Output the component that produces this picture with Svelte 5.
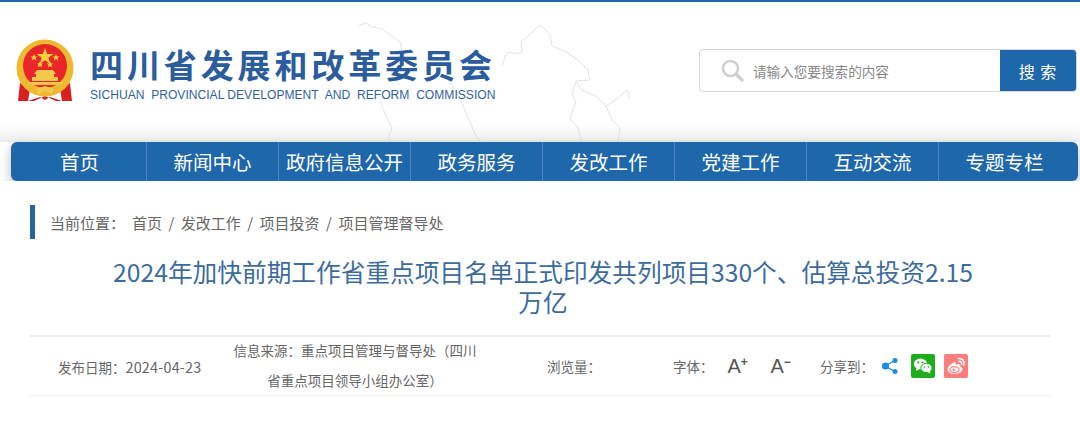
<script>
  const nav = ['首页','新闻中心','政府信息公开','政务服务','发改工作','党建工作','互动交流','专题专栏'];
  const crumbs = ['首页','发改工作','项目投资','项目管理督导处'];
</script>

<div class="page">
  <header class="header">
    <svg class="map" width="300" height="135" viewBox="0 0 300 135" fill="none" stroke="#e2e2e2" stroke-width="1">
      <path d="M28 16 L36 13 L42 17 L52 19 L62 26 L70 32 L72 42 L76 50 M50 92 L56 106 L62 118 L58 128 L62 133"/>
      <path d="M118 70 L128 84 L134 98 L140 112 L146 126 L152 133"/>
      <path d="M172 56 L176 44 L180 42 L188 44 L192 42 L191 32 L200 24 L210 15 L220 24 L222 36 L236 42 L248 50 L258 60 L260 70 L246 71 L252 80 L266 86 L276 96 L288 88 L297 80 L300 88"/>
      <path d="M246 71 L242 84 L246 92 L240 108 L248 118 L252 133 M276 96 L282 110 L290 118 L288 133"/>
    </svg>
    <div class="logo">
      <svg class="emblem" width="58" height="64" viewBox="0 0 58 64">
        <path d="M4 44 L14 50 L12 62 L24 58 L29 61 L34 58 L46 62 L44 50 L54 44 L56 62 L40 62 L29 57 L18 62 L2 62Z" fill="#d92020"/>
        <circle cx="29" cy="29" r="28.5" fill="#efb92f"/>
        <circle cx="29" cy="27" r="22" fill="#e8262a"/>
        <path d="M29 9 L31.2 15 L37.5 15 L32.4 18.8 L34.3 25 L29 21.3 L23.7 25 L25.6 18.8 L20.5 15 L26.8 15Z" fill="#f9d23c"/>
        <path d="M18 15l1 2.5h2.6l-2.1 1.6.8 2.6-2.3-1.6-2.3 1.6.8-2.6-2.1-1.6h2.6zM40 15l1 2.5h2.6l-2.1 1.6.8 2.6-2.3-1.6-2.3 1.6.8-2.6-2.1-1.6h2.6zM24 22l1 2.4h2.4l-2 1.5.8 2.5-2.2-1.5-2.2 1.5.8-2.5-2-1.5h2.4zM34 22l1 2.4h2.4l-2 1.5.8 2.5-2.2-1.5-2.2 1.5.8-2.5-2-1.5h2.4z" fill="#f9d23c"/>
        <path d="M21 31 H37 L40 35 H38 V38 H42 V42 H16 V38 H20 V35 H18Z" fill="#f3c94d"/>
        <path d="M10 43 H48 V46 H10Z" fill="#f3c94d"/>
        <path d="M6 42 Q14 56 29 53 Q44 56 52 42 L50 40 Q42 50 29 48 Q16 50 8 40Z" fill="#efb92f"/>
        <path d="M20 50 L29 47 L38 50 L36 55 L29 52 L22 55Z" fill="#f3c94d"/>
      </svg>
      <div class="logo-text">
        <div class="logo-cn">四川省发展和改革委员会</div>
        <div class="logo-en">SICHUAN&nbsp; PROVINCIAL DEVELOPMENT&nbsp; AND&nbsp; REFORM&nbsp; COMMISSION</div>
      </div>
    </div>
    <div class="search">
      <div class="search-field">
        <svg width="24" height="24" viewBox="0 0 24 24" fill="none" stroke="#cfcfcf">
          <circle cx="9.5" cy="9.5" r="7.5" stroke-width="2.6"/>
          <path d="M15 15 L21 21" stroke-width="3.4" stroke-linecap="round"/>
        </svg>
        <span>请输入您要搜索的内容</span>
      </div>
      <div class="search-btn">搜 索</div>
    </div>
  </header>

  <nav class="nav">
    {#each nav as item}
      <div class="nav-item">{item}</div>
    {/each}
  </nav>

  <main class="main">
    <div class="crumbs">
      <span class="here">当前位置：</span>
      <span class="trail">{crumbs.join(' / ')}</span>
    </div>

    <h1 class="title">2024年加快前期工作省重点项目名单正式印发共列项目330个、估算总投资2.15<br />万亿</h1>

    <div class="meta">
      <div class="date">发布日期：<span class="digits">2024-04-23</span></div>
      <div class="source">信息来源：重点项目管理与督导处（四川<br />省重点项目领导小组办公室）</div>
      <div class="views">浏览量：</div>
      <div class="font">
        <span class="font-label">字体：</span>
        <span class="fa">A<sup>+</sup></span>
        <span class="fa">A<sup>−</sup></span>
      </div>
      <div class="share">
        <span>分享到：</span>
        <svg class="sh" width="18" height="18" viewBox="0 0 18 18" fill="#1b8de8" stroke="#1b8de8">
          <path d="M4 9 L14 3.5 M4 9 L14 14.5" stroke-width="1.4"/>
          <circle cx="4.5" cy="9" r="3.6" stroke="none"/>
          <circle cx="14" cy="3.5" r="2.5" stroke="none"/>
          <circle cx="14" cy="14.5" r="2.5" stroke="none"/>
        </svg>
        <svg class="wx" width="24" height="24" viewBox="0 0 24 24">
          <rect width="24" height="24" rx="2" fill="#1dad1d"/>
          <ellipse cx="9.5" cy="10" rx="6.6" ry="5.4" fill="#fff"/>
          <path d="M5.5 13.5 L5 17 L8.5 15Z" fill="#fff"/>
          <ellipse cx="15.5" cy="14" rx="5.6" ry="4.6" fill="#fff" stroke="#1dad1d"/>
          <path d="M18.5 17 L19.5 19.5 L16.5 18Z" fill="#fff"/>
          <circle cx="7.3" cy="8.5" r="1" fill="#1dad1d"/><circle cx="11.5" cy="8.5" r="1" fill="#1dad1d"/>
          <circle cx="13.6" cy="13" r=".8" fill="#1dad1d"/><circle cx="17.4" cy="13" r=".8" fill="#1dad1d"/>
        </svg>
        <svg width="24" height="24" viewBox="0 0 24 24">
          <rect width="24" height="24" rx="2" fill="#fb7d7d"/>
          <path d="M10.5 8.2 C6.5 9.6 3.4 13 3.6 15.6 C3.8 18.6 7.4 20.3 11 20 C15.2 19.7 18.6 17.4 18.4 14.8 C18.3 13.4 17 12.8 16 12.5 C16.6 10.8 15.8 9.8 13.6 10.2 L11.6 11 C12 9 11.8 7.8 10.5 8.2Z" fill="#fff"/>
          <ellipse cx="10.5" cy="15.6" rx="4.6" ry="3" fill="none" stroke="#fb7d7d" stroke-width="1.2"/>
          <circle cx="9.7" cy="15.8" r="1.3" fill="#fb7d7d"/>
          <path d="M14.5 4.6 C18 4 21 7 20 11 M14.8 7.4 C16.8 7 18 8.6 17.6 10.4" fill="none" stroke="#fff" stroke-width="1.5" stroke-linecap="round"/>
        </svg>
      </div>
    </div>
  </main>
</div>

<style>
  :global(body) { margin: 0; background: #fff; }
  .page {
    width: 1080px;
    height: 448px;
    overflow: hidden;
    font-family: "Noto Sans CJK SC", "Liberation Sans", sans-serif;
    color: #666;
    border-top: 2px solid #2068ac;
    box-sizing: border-box;
    position: relative;
  }
  .header {
    position: relative;
    height: 140px;
    box-sizing: border-box;
    padding: 37px 3px 0 16px;
    display: flex;
    justify-content: space-between;
    align-items: flex-start;
    background: linear-gradient(to bottom, #fff 0, #fff 122px, #eeeeee 140px);
  }
  .map { position: absolute; left: 330px; top: 8px; }
  .logo { display: flex; align-items: flex-start; position: relative; }
  .emblem { flex: none; }
  .logo-text { margin-left: 16px; margin-top: 5px; }
  .logo-cn {
    font-size: 33px;
    line-height: 40px;
    font-weight: 700;
    letter-spacing: 3.9px;
    color: #2a5c9e;
    white-space: nowrap;
  }
  .logo-en {
    font-family: "Liberation Sans", sans-serif;
    font-size: 12.1px;
    line-height: 14px;
    color: #2f639f;
    white-space: nowrap;
    margin-top: 4px;
  }
  .search {
    position: relative;
    display: flex;
    width: 378px;
    height: 43px;
    margin-top: 10px;
    border: 1px solid #d8d8d8;
    border-radius: 4px;
    box-sizing: border-box;
    background: #fff;
    overflow: hidden;
  }
  .search-field {
    flex: 1;
    display: flex;
    align-items: center;
    padding-left: 21px;
    font-size: 13.6px;
    color: #888;
    gap: 8px;
  }
  .search-btn {
    width: 76px;
    background: #1f67ab;
    color: #fff;
    display: flex;
    align-items: center;
    justify-content: center;
    font-size: 16px;
    letter-spacing: 1px;
  }
  .nav {
    position: relative;
    margin-left: 11px;
    width: 1067px;
    height: 39px;
    padding-right: 8px;
    box-sizing: border-box;
    background: #1f67ab;
    border-radius: 6px;
    box-shadow: 0 5px 12px rgba(0, 0, 0, .28);
    display: grid;
    grid-template-columns: 135px repeat(7, 132px);
  }
  .nav-item {
    display: flex;
    align-items: center;
    justify-content: center;
    color: #fff;
    font-size: 19.5px;
    white-space: nowrap;
    border-left: 1px solid #4f88c0;
    box-sizing: border-box;
  }
  .nav-item:first-child { border-left: 0; padding-left: 2px; }
  .main { padding: 24px 30px 0; position: relative; background: #fff; }
  .crumbs {
    border-left: 5px solid #2a649f;
    height: 34px;
    display: flex;
    align-items: center;
    padding-left: 15px;
    box-sizing: border-box;
    font-size: 15px;
    color: #666;
    gap: 7px;
    white-space: nowrap;
  }
  .trail { word-spacing: 3.1px; }
  .title {
    margin: 17px 0 0;
    font-size: 24.7px;
    line-height: 30px;
    font-weight: 400;
    color: #3c6c9e;
    text-align: center;
    white-space: nowrap;
    padding-left: 6px;
  }
  .meta {
    margin-top: 19px;
    height: 61px;
    box-sizing: border-box;
    border-top: 2px solid #eeeeee;
    border-bottom: 1px solid #eef0f0;
    display: flex;
    align-items: center;
    font-size: 13.5px;
    color: #666;
    white-space: nowrap;
  }
  .date { margin-left: 28px; width: 175px; flex: none; }
  .digits { font-size: 14.4px; letter-spacing: .2px; }
  .source { width: 244px; flex: none; text-align: center; line-height: 30px; padding-bottom: 2px; }
  .views { margin-left: 70px; width: 126px; flex: none; }
  .font { display: flex; align-items: center; width: 147px; flex: none; }
  .font-label { margin-right: 14px; }
  .fa {
    font-family: "Liberation Sans", sans-serif;
    font-size: 20px;
    color: #555;
    width: 43px;
    flex: none;
  }
  .fa sup { font-size: 12px; line-height: 0; font-weight: 700; vertical-align: 7px; }
  .share { display: flex; align-items: center; }
  .sh { margin-left: 7px; }
  .wx { margin: 0 9px 0 12px; }
</style>
